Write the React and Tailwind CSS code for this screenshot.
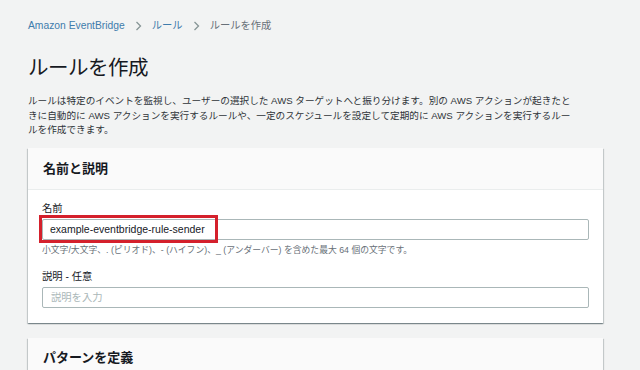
import React from 'react'

const font = { fontFamily: '"Liberation Sans", "Noto Sans CJK JP", sans-serif' }

const Chevron = () => (
    <svg width="7" height="10" viewBox="0 0 7 10" className="mx-[10px]">
        <path d="M1.5 1 L5.5 5 L1.5 9" fill="none" stroke="#879596" strokeWidth="1.3" />
    </svg>
)

const App = () => {
    return (
        <div style={font} className='w-[640px] h-[370px] overflow-hidden bg-[#f2f3f3] pl-[28px] pr-[37px] pt-[19px] text-[#16191f]'>

            <div className='flex items-center text-[10.3px] leading-[14px]'>
                <span className='text-[#3f7cac]'>Amazon EventBridge</span>
                <Chevron />
                <span className='text-[#3f7cac]'>ルール</span>
                <Chevron />
                <span className='text-[#687078]'>ルールを作成</span>
            </div>

            <h1 className='mt-[21px] text-[20.5px] leading-[28px] font-normal tracking-tight'>ルールを作成</h1>

            <p className='mt-[12px] text-[9.65px] leading-[14.5px] text-[#2f3439] whitespace-nowrap'>
                ルールは特定のイベントを監視し、ユーザーの選択した AWS ターゲットへと振り分けます。別の AWS アクションが起きたと<br />
                きに自動的に AWS アクションを実行するルールや、一定のスケジュールを設定して定期的に AWS アクションを実行するルー<br />
                ルを作成できます。
            </p>

            <div className='mt-[10.5px] bg-white shadow-[0_1px_1px_0_rgba(0,28,36,0.3),1px_1px_1px_0_rgba(0,28,36,0.15),-1px_1px_1px_0_rgba(0,28,36,0.15)]'>
                <div className='bg-[#fafafa] border-b border-[#eaeded] px-[15px] py-[11.5px]'>
                    <h2 className='text-[13px] leading-[18px] font-bold'>名前と説明</h2>
                </div>

                <div className='px-[14px] pt-[12px] pb-[15px]'>
                    <div className='text-[10.3px] leading-[14px]'>名前</div>
                    <div className='relative mt-[3px]'>
                        <div className='h-[21px] border border-[#aab7b8] rounded-[2px] pl-[7px] flex items-center text-[10.5px]'>
                            example-eventbridge-rule-sender
                        </div>
                        <div className='absolute -left-[3px] -top-[4px] w-[179px] h-[28px] border-[3px] border-[#d4202c]' />
                    </div>
                    <div className='mt-[4px] text-[8.8px] leading-[12px] text-[#687078]'>
                        小文字/大文字、. (ピリオド)、- (ハイフン)、_ (アンダーバー) を含めた最大 64 個の文字です。
                    </div>

                    <div className='mt-[14px] text-[10.3px] leading-[14px]'>説明 - 任意</div>
                    <div className='mt-[3px] h-[21px] border border-[#aab7b8] rounded-[2px] pl-[8px] flex items-center text-[10.3px] text-[#aab7b8]'>
                        説明を入力
                    </div>
                </div>
            </div>

            <div className='mt-[15px] bg-white shadow-[0_1px_1px_0_rgba(0,28,36,0.3),1px_1px_1px_0_rgba(0,28,36,0.15),-1px_1px_1px_0_rgba(0,28,36,0.15)]'>
                <div className='bg-[#fafafa] border-b border-[#eaeded] px-[15px] pt-[11px] pb-[12px]'>
                    <h2 className='text-[13px] leading-[18px] font-bold'>パターンを定義</h2>
                </div>
                <div className='h-[40px]' />
            </div>

        </div>
    )
}

export default App
